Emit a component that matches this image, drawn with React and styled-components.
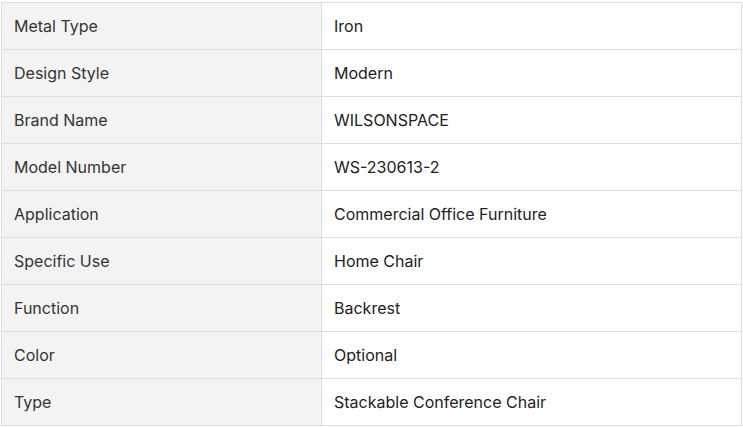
import styled, { createGlobalStyle } from 'styled-components'

const specs = [
  ['Metal Type', 'Iron'],
  ['Design Style', 'Modern'],
  ['Brand Name', 'WILSONSPACE'],
  ['Model Number', 'WS-230613-2'],
  ['Application', 'Commercial Office Furniture'],
  ['Specific Use', 'Home Chair'],
  ['Function', 'Backrest'],
  ['Color', 'Optional'],
  ['Type', 'Stackable Conference Chair'],
]

const GlobalStyle = createGlobalStyle`
  body {
    margin: 0;
    background: #fff;
  }
`

const Wrapper = styled.div`
  padding: 2px 0 0 1px;
  width: 741px;
`

const Table = styled.table`
  width: 741px;
  border-collapse: collapse;
  table-layout: fixed;
`

const Row = styled.tr`
  height: 47px;
`

const Cell = styled.td`
  box-sizing: border-box;
  padding: 0 12px;
  border: 1px solid #dddddd;
  font-family: Inter, 'Liberation Sans', sans-serif;
  font-size: 16px;
  font-weight: 400;
`

const Label = styled(Cell)`
  width: 320px;
  background: #f3f3f3;
  color: #333;
`

const Value = styled(Cell)`
  background: #fff;
  color: #222;
`

const App = () => {
  return (
    <Wrapper>
      <GlobalStyle />
      <Table>
        <tbody>
          {specs.map(([label, value]) => (
            <Row key={label}>
              <Label>{label}</Label>
              <Value>{value}</Value>
            </Row>
          ))}
        </tbody>
      </Table>
    </Wrapper>
  )
}

export default App
